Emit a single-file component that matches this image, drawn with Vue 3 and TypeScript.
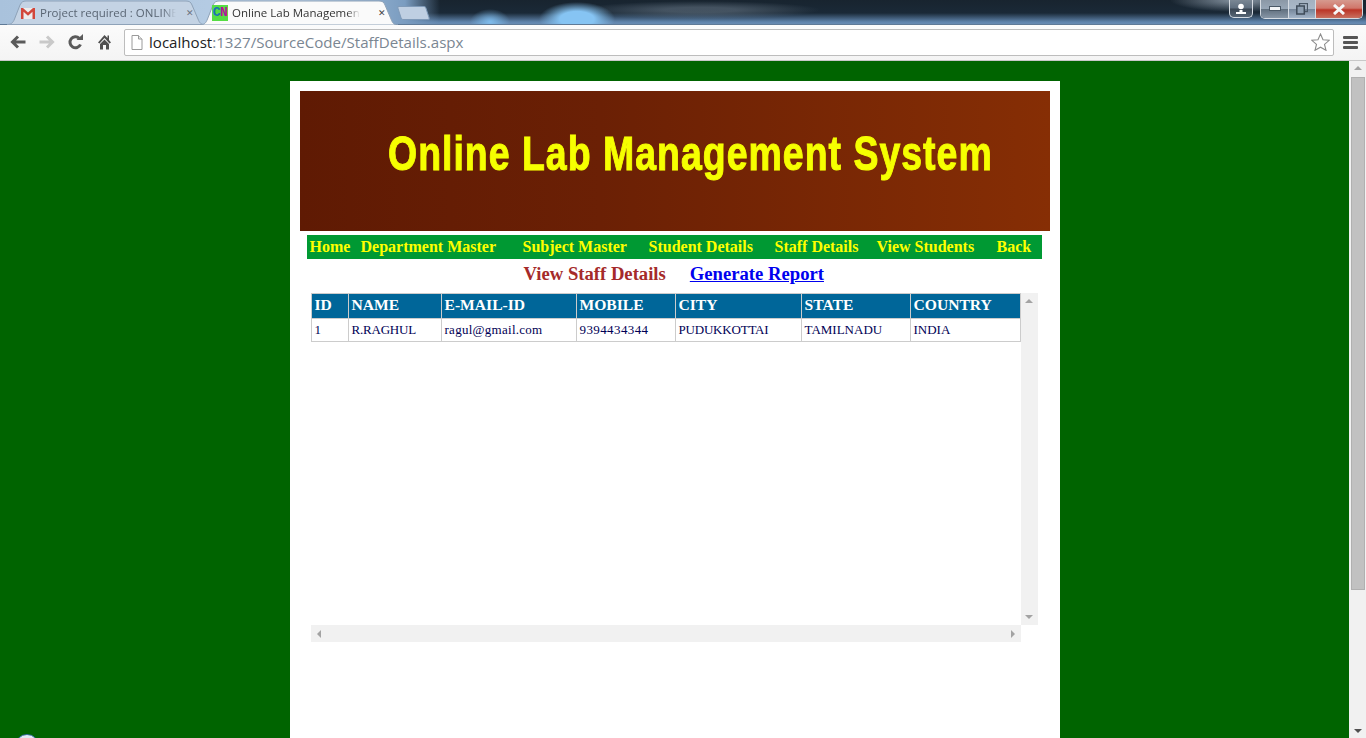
<script setup lang="ts">
const navItems = [
  { label: "Home", width: 51 },
  { label: "Department Master", width: 161 },
  { label: "Subject Master", width: 126 },
  { label: "Student Details", width: 126 },
  { label: "Staff Details", width: 103 },
  { label: "View Students", width: 120 },
  { label: "Back", width: 45 },
];

const columns = [
  { title: "ID", width: 37 },
  { title: "NAME", width: 93 },
  { title: "E-MAIL-ID", width: 135 },
  { title: "MOBILE", width: 99 },
  { title: "CITY", width: 126 },
  { title: "STATE", width: 109 },
  { title: "COUNTRY", width: 110 },
];

const rows = [["1", "R.RAGHUL", "ragul@gmail.com", "9394434344", "PUDUKKOTTAI", "TAMILNADU", "INDIA"]];
</script>

<template>
  <div class="shell">
    <header class="browser">
      <div class="tabstrip">
        <div class="tab">
          <svg class="tab-bg" width="198" height="25" viewBox="0 0 198 25">
            <path d="M0 24.500C4 24.500 6 23 7.500 19L13 5C14.500 2 16 1 19 1H179C182 1 184 2 185 5L191 19C192.500 23 194 24.500 198 24.500Z" fill="#c4d3e4" stroke="#8ea2b8" stroke-width="1" />
          </svg>
          <svg class="favicon" width="16" height="16" viewBox="0 0 16 16">
            <path d="M1 3H15V14H1Z" fill="#ececec" />
            <path d="M1 3H3L8 7.500L13 3H15V14H12.500V6.800L8 10.800L3.500 6.800V14H1Z" fill="#d2473b" />
          </svg>
          <span class="tab-title muted">Project required : ONLINE LAB</span>
          <span class="tab-close">✕</span>
        </div>
        <div class="tab active">
          <svg class="tab-bg" width="198" height="25" viewBox="0 0 198 25">
            <path d="M0 25C4 25 6 23 7.500 19L13 5C14.500 2 16 1 19 1H179C182 1 184 2 185 5L191 19C192.500 23 194 25 198 25Z" fill="#fafafa" stroke="#8ea2b8" stroke-width="1" />
          </svg>
          <span class="cn-icon"><b class="c">C</b><b class="n">N</b></span>
          <span class="tab-title">Online Lab Management System</span>
          <span class="tab-close dark">✕</span>
        </div>
        <div class="new-tab"></div>

        <div class="window-controls">
          <div class="win-btn profile">
            <svg width="14" height="12" viewBox="0 0 14 12">
              <circle cx="7" cy="3.500" r="2.800" fill="#fff" />
              <path d="M2 11V9H5.500V7H8.500V9H12V11Z" fill="#fff" />
            </svg>
          </div>
          <div class="win-group">
            <div class="win-btn minimize">
              <svg width="12" height="6" viewBox="0 0 12 6"><rect x="0.500" y="0.500" width="11" height="4" fill="#f2f4f6" stroke="#4a5866" /></svg>
            </div>
            <div class="win-btn restore">
              <svg width="12" height="12" viewBox="0 0 12 12">
                <rect x="3.500" y="0.500" width="8" height="8" fill="none" stroke="#4a5866" stroke-width="1.300" />
                <rect x="0.800" y="3" width="7.500" height="8" fill="#8fa0b2" stroke="#3f4c5a" stroke-width="1.500" />
              </svg>
            </div>
            <div class="win-btn close">
              <svg width="14" height="11" viewBox="0 0 14 11">
                <path d="M2 1L12 10M12 1L2 10" stroke="#f6f6f6" stroke-width="3" />
              </svg>
            </div>
          </div>
        </div>
      </div>

      <div class="toolbar">
        <button class="tool">
          <svg width="16" height="14" viewBox="0 0 16 14"><path d="M15.500 7H3M8 1.500L2.500 7L8 12.500" fill="none" stroke="#5a5a5a" stroke-width="3" /></svg>
        </button>
        <button class="tool">
          <svg width="16" height="14" viewBox="0 0 16 14"><path d="M0.500 7H13M8 1.500L13.500 7L8 12.500" fill="none" stroke="#c9c9c9" stroke-width="3" /></svg>
        </button>
        <button class="tool">
          <svg width="16" height="16" viewBox="0 0 16 16">
            <path d="M12.500 10.500A5.500 5.500 0 1 1 11.300 4.300" fill="none" stroke="#5a5a5a" stroke-width="3" />
            <path d="M8.500 6H15V0Z" fill="#5a5a5a" />
          </svg>
        </button>
        <button class="tool">
          <svg width="16" height="16" viewBox="0 0 16 16">
            <path d="M7.500 1L1 8.500L2.500 9.500L7.500 4L12.500 9.500L14 8.500L12 6V1.500H10.500V4Z" fill="#505050" />
            <path d="M3 10L7.500 5.500L12 10V15.500H9V11H6V15.500H3Z" fill="#505050" />
          </svg>
        </button>
        <div class="omnibox">
          <svg class="page-icon" width="12" height="15" viewBox="0 0 12 15">
            <path d="M1 .5H7.500L11 4V14.500H1Z" fill="#fff" stroke="#9a9a9a" />
            <path d="M7.500 .5V4H11" fill="#e8e8e8" stroke="#9a9a9a" />
          </svg>
          <span class="url"><span class="host">localhost</span>:1327/SourceCode/StaffDetails.aspx</span>
          <svg class="star" width="19" height="18" viewBox="0 0 19 18">
            <path d="M9.500 1L12 6.800L18.200 7.300L13.500 11.400L15 17.300L9.500 14.200L4 17.300L5.500 11.400L0.800 7.300L7 6.800Z" fill="#fff" stroke="#8c8c8c" stroke-width="1.100" />
          </svg>
        </div>
        <div class="menu-btn"><i></i><i></i><i></i></div>
      </div>
    </header>

    <div class="viewport">
      <main class="page">
        <div class="card">
          <div class="banner"><h1>Online Lab Management System</h1></div>

          <nav class="nav">
            <a v-for="item in navItems" :key="item.label" :style="{ width: item.width + 'px' }">{{ item.label }}</a>
          </nav>

          <div class="heading">
            <span class="heading-title">View Staff Details</span>
            <a class="heading-link">Generate Report</a>
          </div>

          <div class="grid-box">
            <div class="grid-pane">
              <table class="staff">
                <colgroup>
                  <col v-for="col in columns" :key="col.title" :style="{ width: col.width + 'px' }" />
                </colgroup>
                <thead>
                  <tr><th v-for="col in columns" :key="col.title">{{ col.title }}</th></tr>
                </thead>
                <tbody>
                  <tr v-for="row in rows" :key="row[0]">
                    <td v-for="cell in row" :key="cell">{{ cell }}</td>
                  </tr>
                </tbody>
              </table>
            </div>
            <div class="bar bar-v"><i class="arrow up"></i><i class="arrow down"></i></div>
            <div class="bar bar-h"><i class="arrow left"></i><i class="arrow right"></i></div>
          </div>
        </div>
      </main>
      <aside class="page-scroll">
        <i class="arrow up"></i>
        <div class="thumb"></div>
        <i class="arrow down dark"></i>
      </aside>
      <div class="bubble"></div>
    </div>
  </div>
</template>

<style scoped>
.shell {
  width: 1366px;
  height: 738px;
  display: flex;
  flex-direction: column;
  overflow: hidden;
  position: relative;
}

/* browser chrome */
.browser {
  height: 61px;
  flex: none;
}
.tabstrip {
  height: 25px;
  display: flex;
  align-items: flex-start;
  padding-left: 7px;
  position: relative;
  box-sizing: border-box;
  border-bottom: 1px solid #5f7a97;
  background:
    radial-gradient(ellipse 20px 13px at 490px 22px, #7fbcec 0%, rgba(127, 188, 236, 0) 100%),
    radial-gradient(ellipse 38px 17px at 577px 19px, #86c4f3 45%, rgba(134, 196, 243, 0) 100%),
    radial-gradient(ellipse 120px 9px at 700px 10px, rgba(120, 135, 150, 0.45) 30%, rgba(120, 135, 150, 0) 100%),
    radial-gradient(ellipse 70px 12px at 1240px 0px, rgba(190, 205, 220, 0.7) 0%, rgba(190, 205, 220, 0) 100%),
    linear-gradient(180deg, #18242f 0%, #1a2937 13px, #5f84ac 22px, #6c8fb5 25px);
}
.tabstrip::before {
  content: "";
  position: absolute;
  left: 0;
  top: 0;
  width: 440px;
  height: 24px;
  background: linear-gradient(90deg, #a9c2dc 0%, #b9cfe6 300px, #7a9cc0 405px, rgba(100, 140, 180, 0) 440px);
}
.tab {
  width: 198px;
  height: 25px;
  margin-right: -5px;
  position: relative;
  display: flex;
  align-items: center;
  font: 11.5px "Open Sans", sans-serif;
  color: #333;
  flex: none;
}
.tab.active {
  z-index: 2;
}
.tab-bg {
  position: absolute;
  left: 0;
  top: 0;
}
.favicon {
  position: relative;
  margin-left: 13px;
  flex: none;
}
.cn-icon {
  position: relative;
  margin-left: 12px;
  width: 16px;
  height: 16px;
  flex: none;
  background: #55dd44;
  font: bold 13px/16px "Liberation Mono", monospace;
  display: flex;
  justify-content: center;
  letter-spacing: -0.500px;
  overflow: hidden;
}
.cn-icon .c {
  color: #1c6fb8;
}
.cn-icon .n {
  color: #b5119a;
}
.tab-title {
  position: relative;
  margin-left: 4px;
  width: 136px;
  white-space: nowrap;
  overflow: hidden;
  flex: none;
  line-height: 17px;
  -webkit-mask-image: linear-gradient(90deg, #000 90%, transparent 100%);
  mask-image: linear-gradient(90deg, #000 90%, transparent 100%);
}
.active .tab-title {
  width: 128px;
}
.tab-title.muted {
  color: #5a6674;
}
.tab-close {
  position: relative;
  margin-left: 10px;
  font: bold 9px "DejaVu Sans", sans-serif;
  color: #6b7280;
}
.tab-close.dark {
  margin-left: 18px;
  color: #444;
}
.new-tab {
  width: 29px;
  height: 14px;
  margin: 6px 0 0 6px;
  flex: none;
  position: relative;
  z-index: 1;
  background: #bfcfe2;
  border: 1px solid #7f9ab8;
  border-radius: 2px;
  transform: skewX(18deg);
  box-sizing: border-box;
}
.window-controls {
  position: absolute;
  left: 1229px;
  top: 0;
  display: flex;
  gap: 7px;
}
.win-group {
  display: flex;
  border: 1px solid #d5dbe2;
  border-top: 0;
  border-radius: 0 0 5px 5px;
  overflow: hidden;
}
.win-btn {
  height: 18px;
  display: flex;
  align-items: center;
  justify-content: center;
  background: linear-gradient(180deg, #7a8794 0%, #5f6e7e 48%, #3a4552 52%, #566574 100%);
  box-sizing: border-box;
}
.profile {
  width: 24px;
  border: 1px solid #d5dbe2;
  border-top: 0;
  border-radius: 0 0 5px 5px;
}
.minimize {
  width: 28px;
  background: linear-gradient(180deg, #8b98a6 0%, #97a6b6 48%, #61707f 52%, #8796a6 100%);
  border-right: 1px solid #d5dbe2;
}
.restore {
  width: 27px;
  background: linear-gradient(180deg, #a3b1c0 0%, #a9b8c8 48%, #75869a 52%, #a3b4c8 100%);
  border-right: 1px solid #d5dbe2;
}
.close {
  width: 46px;
  background: linear-gradient(180deg, #d69a8f 0%, #d0766a 45%, #bb3527 55%, #c9705f 100%);
}

.toolbar {
  height: 36px;
  box-sizing: border-box;
  display: flex;
  align-items: center;
  padding: 0 0 1px 3px;
  background: linear-gradient(180deg, #fbfbfb 0%, #f4f4f4 100%);
  border-bottom: 1px solid #c8c8c8;
}
.tool {
  width: 29px;
  height: 28px;
  padding: 0;
  border: 0;
  background: none;
  display: flex;
  align-items: center;
  justify-content: center;
  flex: none;
}
.omnibox {
  width: 1210px;
  height: 27px;
  margin-left: 5px;
  box-sizing: border-box;
  background: #fff;
  border: 1px solid #bdbdbd;
  border-radius: 2px;
  display: flex;
  align-items: center;
  padding: 0 3px 0 6px;
  flex: none;
}
.page-icon {
  flex: none;
}
.url {
  margin-left: 6px;
  font: 15.1px "Open Sans", sans-serif;
  color: #7a8692;
  flex: 1;
}
.host {
  color: #222;
}
.menu-btn {
  width: 15px;
  margin-left: 9px;
  display: flex;
  flex-direction: column;
  gap: 2px;
}
.menu-btn i {
  display: block;
  height: 3px;
  background: #555;
  border-radius: 1px;
}

/* page */
.viewport {
  flex: 1;
  display: flex;
  min-height: 0;
  position: relative;
}
.page {
  flex: 1;
  background: #006400;
  overflow: hidden;
}
.card {
  width: 770px;
  height: 800px;
  box-sizing: border-box;
  margin: 20px auto 0;
  padding: 10px;
  background: #fff;
}
.banner {
  height: 140px;
  box-sizing: border-box;
  padding: 34px 0 0 88px;
  background: linear-gradient(90deg, #5f1a03 0%, #6b2005 40%, #862e05 100%);
}
/* the original is a condensed heavy face; none is installed, so the bold is narrowed */
.banner h1 {
  margin: 0;
  font: bold 48px/58px "Liberation Sans", sans-serif;
  letter-spacing: 1.300px;
  color: #f6ff00;
  white-space: nowrap;
  transform: scaleX(0.78);
  transform-origin: left center;
  -webkit-text-stroke: 1px #f6ff00;
}
.nav {
  width: 735px;
  height: 24px;
  margin: 4px 0 0 7px;
  box-sizing: border-box;
  padding-left: 3px;
  display: flex;
  align-items: center;
  background: #009933;
  font: bold 16px "Liberation Serif", serif;
  color: #ffff00;
}
.nav a {
  flex: none;
  white-space: nowrap;
}
.nav a:nth-child(2) {
  margin-right: 1px;
}
.nav a:nth-child(5) {
  margin-right: -1px;
}
.heading {
  height: 34px;
  box-sizing: border-box;
  padding-bottom: 4px;
  display: flex;
  align-items: center;
  margin-left: 224px;
  gap: 24px;
  font: bold 18.67px "Liberation Serif", serif;
}
.heading-title {
  color: #a52a2a;
}
.heading-link {
  color: #0000ee;
  text-decoration: underline;
}
.grid-box {
  display: grid;
  grid-template-columns: 710px 17px;
  grid-template-rows: 332px 17px;
  margin-left: 11px;
  width: 727px;
}
.grid-pane {
  overflow: hidden;
}
.staff {
  border-collapse: collapse;
  table-layout: fixed;
  width: 709px;
  font-family: "Liberation Serif", serif;
}
.staff th,
.staff td {
  border: 1px solid #cccccc;
  padding: 0 3px;
  text-align: left;
  white-space: nowrap;
  overflow: hidden;
}
.staff th {
  height: 25px;
  box-sizing: border-box;
  padding-bottom: 2px;
  background: #006699;
  color: #fff;
  font-size: 15.6px;
  font-weight: bold;
}
.staff td {
  height: 22px;
  font-size: 13px;
  color: #000055;
}
.staff td:nth-child(3) {
  letter-spacing: 0.27px;
}
.staff td:nth-child(4) {
  letter-spacing: 0.4px;
}
.staff td:nth-child(2),
.staff td:nth-child(5) {
  letter-spacing: -0.2px;
}
.bar {
  background: #f1f1f1;
  display: flex;
  align-items: center;
  justify-content: space-between;
}
.bar-v {
  flex-direction: column;
  padding: 6px 0;
  box-sizing: border-box;
}
.bar-h {
  padding: 0 6px;
  box-sizing: border-box;
}

/* scrollbar arrows */
.arrow {
  display: block;
  width: 0;
  height: 0;
  flex: none;
}
.arrow.up {
  border: 4px solid transparent;
  border-top: 0;
  border-bottom: 4px solid #a3a3a3;
}
.arrow.down {
  border: 4px solid transparent;
  border-bottom: 0;
  border-top: 4px solid #a3a3a3;
}
.arrow.left {
  border: 4px solid transparent;
  border-left: 0;
  border-right: 4px solid #a3a3a3;
}
.arrow.right {
  border: 4px solid transparent;
  border-right: 0;
  border-left: 4px solid #a3a3a3;
}
.arrow.down.dark {
  border-top-color: #505050;
}
.page-scroll {
  width: 17px;
  flex: none;
  box-sizing: border-box;
  background: #f1f1f1;
  display: flex;
  flex-direction: column;
  align-items: center;
  padding: 5px 0 5px;
}
.thumb {
  width: 14px;
  height: 513px;
  margin-top: 7px;
  margin-bottom: auto;
  margin-left: 1px;
  box-sizing: border-box;
  background: #c1c1c1;
  border: 1px solid #b0b0b0;
}
.bubble {
  position: absolute;
  left: 15px;
  top: 673px;
  width: 24px;
  height: 24px;
  border-radius: 50%;
  box-sizing: border-box;
  border: 1px solid #3a6ea5;
  background: linear-gradient(180deg, #e6eef6, #a9c3dd);
}
</style>

<style>
html,
body {
  margin: 0;
  overflow: hidden;
}
</style>
